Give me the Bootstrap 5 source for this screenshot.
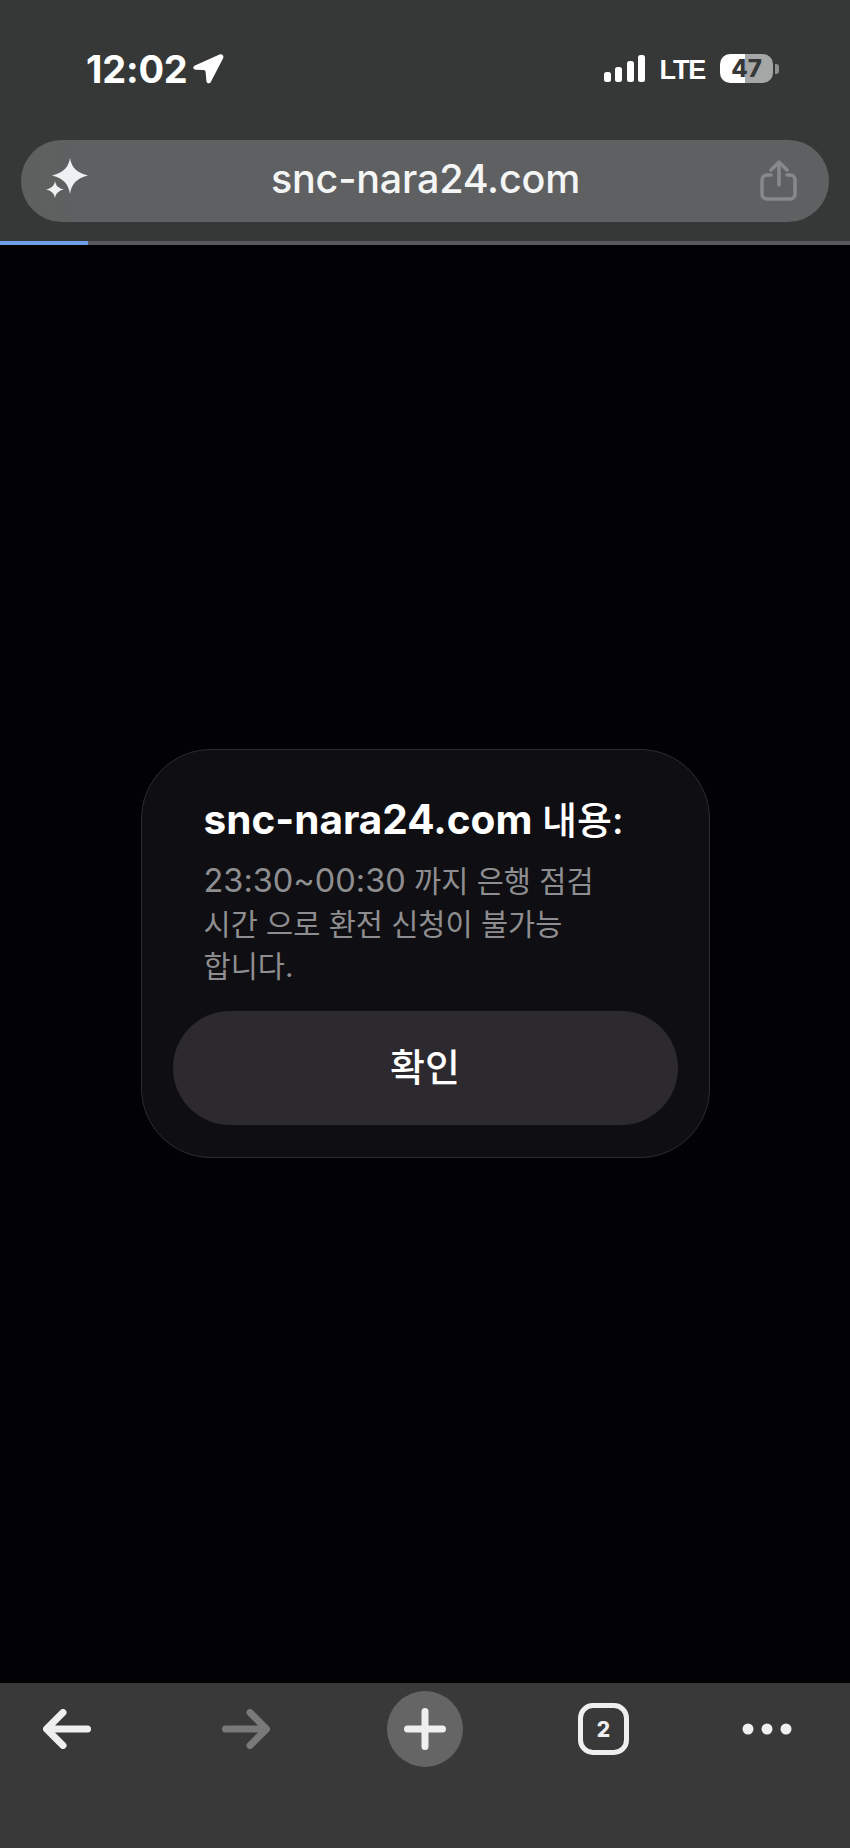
<!doctype html>
<html lang="ko">
<head>
<meta charset="utf-8">
<title>snc-nara24.com</title>
<link href="https://cdn.jsdelivr.net/npm/bootstrap@5.3.0/dist/css/bootstrap.min.css" rel="stylesheet">
<style>
html,body{height:100%}
body{background:#020204;font-family:Inter,"Noto Sans CJK KR",sans-serif;overflow:hidden}
.phone{height:1848px}
.top-area{height:241px;background:#353837;padding:54px 21px 0}
.status-row{height:29px;padding:0 50px 0 65px}
.clock{font-size:38px;font-weight:700;line-height:29px;letter-spacing:-.2px;color:#fff;margin-top:2px}
.lte{font-size:27px;font-weight:700;line-height:29px;letter-spacing:-1.200px;color:#fff;font-family:"Liberation Sans",sans-serif;margin:3px 15px 0 15px}
.batt{width:53px;height:29px;border-radius:10px;background:linear-gradient(90deg,#fff 0 47%,#a5a7a6 47%);color:#353837;font-size:24px;font-weight:800;line-height:29px}
.batt-tip{width:4px;height:10px;border-radius:0 3px 3px 0;background:#8d8f8e;margin-left:2px}
.url-pill{height:82px;margin-top:57px;background:linear-gradient(90deg,#5c615f,#5f6062 12%);padding:0 31px 0 24px}
.url-text{font-size:39.500px;font-weight:500;line-height:1;color:#f4f5f5;letter-spacing:-.2px;margin-top:-3px}
.load-track{height:4px;background:#58595a}
.load-fill{height:4px;width:88px;background:#6f9ee8}
.stage{min-height:0}
.alert-box{width:569px;height:409px;margin:0 0 21px;padding:0 31px;background:#0f0e12;border:1.5px solid #2d2d31;border-radius:70px}
.alert-title{font-size:40.500px;font-weight:700;line-height:50px;color:#fff;margin:45px 0 0 31px;white-space:nowrap}
.title-ko{font-size:38px;font-weight:500}
.alert-msg{font-size:29.500px;line-height:42.500px;color:#8e8e91;margin:15px 0 0 31px;white-space:nowrap}
.msg-num{font-size:32.500px}
.confirm{height:114px;margin-top:23px;background:#2d2a2f;border:0;color:#fff;font-size:38px;font-weight:500;border-radius:57px}
.bottom-bar{height:165px;background:#393939;padding:8px 0 0 43px}
.nav-slot{height:76px}
.fwd{margin-left:131px}
.plus{margin-left:117px;width:76px;height:76px;background:#656565}
.tabs{margin-left:115px;width:51px;height:52px;border:5px solid #efefef;border-radius:15px;font-size:21px;font-weight:800;color:#efefef;line-height:1}
.more{margin-left:113px}
</style>
</head>
<body>
<div class="phone d-flex flex-column">
  <header class="top-area flex-shrink-0">
    <div class="status-row d-flex align-items-center justify-content-between">
      <div class="d-flex align-items-center gap-1">
        <span class="clock">12:02</span>
        <svg width="32" height="32" viewBox="0 0 32 32" aria-hidden="true"><path d="M27.500 1.500 3 12.500c-2.600 1.300-2 4 .8 4.200l7.700.4c1.300.1 2 .8 2.100 2l.8 8.900c.3 2.700 3.200 3.200 4.400.9L31 5.500c1.300-2.700-.8-5-3.500-4z" fill="#fff"/></svg>
      </div>
      <div class="d-flex align-items-center">
        <svg width="41" height="27" viewBox="0 0 41 27" aria-hidden="true" fill="#fff"><rect x="0" y="17" width="7" height="10" rx="2.500"/><rect x="11" y="12" width="7" height="15" rx="2.500"/><rect x="23" y="6" width="7" height="21" rx="2.500"/><rect x="34" y="0" width="7" height="27" rx="2.500"/></svg>
        <span class="lte">LTE</span>
        <span class="batt text-center">47</span>
        <span class="batt-tip"></span>
      </div>
    </div>
    <div class="url-pill rounded-pill d-flex align-items-center justify-content-between">
      <svg width="46" height="46" viewBox="0 0 46 46" aria-hidden="true" fill="#eef0f1"><path d="M25 0c1.500 9 6 14.500 18 17.500-12 3-16.500 9-18 18.500-1.500-9.500-6-15.500-18-18.500C19 14.500 23.500 9 25 0z"/><path d="M10 23c.8 4.500 3 7 9 8.500-6 1.500-8.200 4-9 8.500-.8-4.500-3-7-9-8.500 6-1.500 8.200-4 9-8.500z"/></svg>
      <span class="url-text">snc-nara24.com</span>
      <svg width="38" height="42" viewBox="0 0 38 42" aria-hidden="true" fill="none" stroke="#87898a" stroke-width="3.500" stroke-linecap="round" stroke-linejoin="round"><path d="M11 15H7a5 5 0 0 0-5 5v14a5 5 0 0 0 5 5h23a5 5 0 0 0 5-5V20a5 5 0 0 0-5-5h-3"/><path d="M19 25V3M11 10l8-8 8 8"/></svg>
    </div>
  </header>
  <div class="load-track flex-shrink-0"><div class="load-fill"></div></div>
  <main class="stage flex-grow-1 d-flex align-items-center justify-content-center">
    <div class="alert-box d-flex flex-column">
      <div class="alert-title"><span>snc-nara24.com</span> <span class="title-ko">내용:</span></div>
      <div class="alert-msg">
        <div><span class="msg-num">23:30~00:30</span> <span>까지 은행 점검</span></div>
        <div>시간 으로 환전 신청이 불가능</div>
        <div>합니다.</div>
      </div>
      <button type="button" class="btn confirm w-100">확인</button>
    </div>
  </main>
  <footer class="bottom-bar flex-shrink-0 d-flex align-items-start">
    <div class="nav-slot d-flex align-items-center">
      <svg width="48" height="40" viewBox="0 0 48 40" aria-hidden="true" fill="none" stroke="#efefef" stroke-width="7" stroke-linecap="round" stroke-linejoin="round"><path d="M44.500 20H4M20 3.500 3.500 20 20 36.500"/></svg>
    </div>
    <div class="nav-slot fwd d-flex align-items-center">
      <svg width="48" height="40" viewBox="0 0 48 40" aria-hidden="true" fill="none" stroke="#797979" stroke-width="7" stroke-linecap="round" stroke-linejoin="round"><path d="M3.500 20H44M28 3.500 44.500 20 28 36.500"/></svg>
    </div>
    <div class="plus rounded-circle d-flex align-items-center justify-content-center">
      <svg width="42" height="42" viewBox="0 0 42 42" aria-hidden="true" fill="none" stroke="#efefef" stroke-width="7" stroke-linecap="round"><path d="M3.500 21h35M21 3.500v35"/></svg>
    </div>
    <div class="nav-slot d-flex align-items-center">
      <div class="tabs d-flex align-items-center justify-content-center">2</div>
    </div>
    <div class="nav-slot more d-flex align-items-center">
      <svg width="50" height="12" viewBox="0 0 50 12" aria-hidden="true" fill="#efefef"><circle cx="6" cy="6" r="5.500"/><circle cx="25" cy="6" r="5.500"/><circle cx="44" cy="6" r="5.500"/></svg>
    </div>
  </footer>
</div>
<script src="https://cdn.jsdelivr.net/npm/bootstrap@5.3.0/dist/js/bootstrap.bundle.min.js"></script>
</body>
</html>
